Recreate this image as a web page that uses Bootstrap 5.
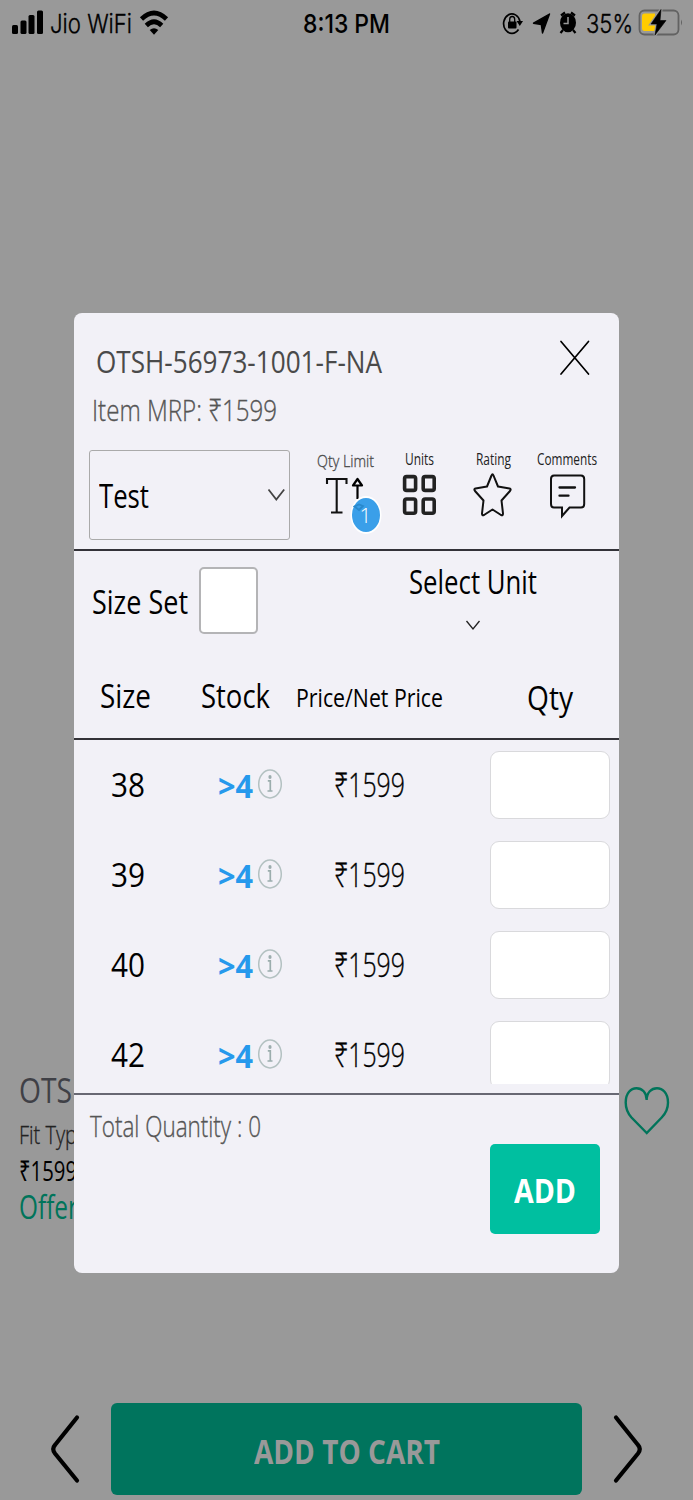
<!DOCTYPE html>
<html lang="en">
<head>
<meta charset="utf-8">
<meta name="viewport" content="width=device-width, initial-scale=1">
<title>Add to cart</title>
<link href="https://cdn.jsdelivr.net/npm/bootstrap@5.3.0/dist/css/bootstrap.min.css" rel="stylesheet">
<style>
  body { font-family: "Open Sans", "Noto Sans", sans-serif; background: #999; color: #000; }
  svg { display: block; flex: none; }
  .screen { width: 693px; height: 1500px; }
  .fit { display: inline-block; white-space: nowrap; transform-origin: 0 50%; }
  .statusbar { height: 47px; font-family: Inter, Roboto, sans-serif; font-size: 26px; line-height: 47px; }
  .thin, .p-fit, .t-mrp, .limit, .cost, .total { font-weight: 300; -webkit-text-stroke: .35px currentColor; }
  .clock { font-weight: 500; }
  .product { margin-top: 1020px; padding-left: 19px; height: 336px; }
  .p-name { font-size: 34.5px; line-height: 46px; color: #3f4046; }
  .p-fit { font-size: 25px; line-height: 43px; color: #222; }
  .p-price { font-size: 28px; line-height: 29px; }
  .p-offer { font-size: 32px; line-height: 44px; color: #00745a; }
  .wish { margin: 18px 22px 0 0; }
  .cart-btn { width: 471px; height: 92px; border-radius: 6px; background: #00745d; color: #999; font-size: 34px; font-weight: 700; border: 0; line-height: 92px; padding: 2px 0 0; }
  .sheet { left: 74px; top: 313px; width: 545px; height: 960px; border-radius: 8px; background: #f2f1f7; overflow: hidden; }
  .sheet-head { height: 119px; padding: 23px 27px 0 19px; }
  .t-code { font-size: 31.5px; line-height: 50px; color: #4a4a4a; padding-left: 3px; }
  .t-mrp { font-size: 30px; line-height: 48px; color: #555; }
  .tools { padding: 18px 15px 0; height: 117px; gap: 18px; }
  .pick { width: 201px; height: 90px; border: 1px solid #aaa; border-radius: 3px; padding: 0 3px 0 9px; background: transparent; font-size: 33px; }
  .pick .fit { padding-top: 2px; }
  .tool { width: 74px; font-size: 16px; line-height: 20px; color: #222; }
  .tool .fit { position: relative; top: -1px; }
  .tool.limit { color: #4c4c4c; font-size: 17px; line-height: 22px; }
  .tool.limit .fit { top: 0; }
  .tool.limit svg { margin-top: -2px; }
  .rule { height: 2px; background: #333238; }
  .rule-foot { margin-top: 9px; background: #686873; }
  .set-row { height: 103px; padding-left: 18px; font-size: 33px; }
  .set-row .set-label { line-height: 102px; }
  .tick { width: 59px; height: 67px; border: 2px solid #b4b4b6; border-radius: 5px; background: #fff; margin: 16px 0 0 11px; }
  .unit { width: 146px; margin-left: 142px; line-height: 61px; }
  .unit svg { margin-top: 7px; }
  .cols { display: grid; grid-template-columns: 107px 109px 159px 170px; align-items: center; justify-items: center; }
  .cols > :nth-child(4) { margin-left: 31px; }
  .col-head { height: 84px; font-size: 33px; }
  .col-head .size-h { margin-right: 5px; }
  .col-head .net { font-size: 25.5px; padding-top: 3px; }
  .rows { height: 344px; overflow: hidden; }
  .line-item { height: 90px; font-size: 33px; line-height: 90px; }
  .stock { justify-self: start; padding-left: 37px; color: #2699ec; font-weight: 700; line-height: 88px; }
  .stock .fit { padding-top: 2px; }
  .stock svg { margin: 0 0 2px 4px; }
  .qty { width: 120px; height: 68px; border: 1px solid #d9d9dc; border-radius: 9px; background: #fff; }
  .sheet-foot { padding: 0 19px 0 16px; }
  .total { font-size: 29px; line-height: 61px; color: #555; }
  .add-btn { width: 110px; height: 90px; margin-top: 49px; border: 0; border-radius: 5px; background: #00bfa0; color: #fff; font-size: 34.5px; font-weight: 700; line-height: 90px; padding: 1px 0 0; }
</style>
</head>
<body>
<div class="screen position-relative overflow-hidden">

  <div class="statusbar d-flex">
    <svg width="50" height="47"><rect x="12" y="25" width="6" height="9" rx="1.5"/><rect x="20.5" y="20.5" width="6" height="13.5" rx="1.5"/><rect x="28.5" y="15" width="6" height="19" rx="1.5"/><rect x="37" y="10.5" width="6" height="23.5" rx="1.5"/></svg>
    <span class="fit thin" data-w="82">Jio WiFi</span>
    <svg width="171" height="47" viewBox="132 0 171 47"><g fill="none" stroke="#000" stroke-width="4.6"><path d="M141.500 19Q154 7 166.500 19"/><path d="M146.300 25.500Q154 18 161.700 25.500"/></g><path d="M154 34.800L149.700 30Q154 26.500 158.300 30Z"/></svg>
    <span class="fit clock" data-w="87">8:13 PM</span>
    <svg width="196" height="47" viewBox="390 0 196 47">
      <path d="M518.500 29.500A8.300 9.700 0 1 1 520 21.500" fill="none" stroke="#000" stroke-width="1.700"/><path d="M516.500 21h6.500l-3.200 5z"/>
      <rect x="508" y="21.500" width="8.500" height="7" rx="1"/><path d="M509.700 22v-2.500a2.500 3 0 0 1 5 0V22" fill="none" stroke="#000" stroke-width="1.300"/>
      <path d="M549.500 14L533.500 23.200L541.300 24.500L542.500 33Z" stroke="#000" stroke-linejoin="round" stroke-width="1.400"/>
      <ellipse cx="568" cy="22.800" rx="8" ry="9.500"/><path d="M561 15.500l4-3M575 15.500l-4-3M563 30l-2.500 3M573 30l2.500 3" stroke="#000" stroke-width="2.200"/><path d="M568 17v6.500h-4.500" fill="none" stroke="#999" stroke-width="1.500"/>
    </svg>
    <span class="fit thin" data-w="47">35%</span>
    <svg width="60" height="47" viewBox="633 0 60 47">
      <rect x="639.500" y="10.500" width="39" height="24" rx="5" fill="none" stroke="#626262" stroke-width="1.800"/><path d="M681 19.500q2 3 0 6z" fill="#626262"/>
      <path d="M644.500 13.500h10.500v17.500h-10.500q-2.500 0-2.500-3V16.500q0-3 2.500-3z" fill="#fc0"/>
      <path d="M661 9.500L651 24h6l-2 11L666 20.500h-6z" stroke="#999" stroke-width="3"/><path d="M661 9.500L651 24h6l-2 11L666 20.500h-6z" stroke="#000" stroke-width=".6"/>
    </svg>
  </div>

  <div class="product d-flex justify-content-between">
    <div class="text-nowrap">
      <div class="p-name"><span class="fit" data-w="53">OTS</span></div>
      <div class="p-fit"><span class="fit" data-w="58">Fit Typ</span></div>
      <div class="p-price"><span class="fit" data-w="58">₹1599</span></div>
      <div class="p-offer"><span class="fit" data-w="59">Offer</span></div>
    </div>
    <svg class="wish" width="48" height="52" viewBox="623 1085 48 52"><path d="M646.700 1133L631.500 1117.500Q625.700 1111 625.700 1102.500C625.700 1093 631 1088.200 636.500 1088.200C642 1088.200 646.700 1092.500 646.700 1100C646.700 1092.500 651.500 1088.200 657 1088.200C662.500 1088.200 668 1093 668 1102.500Q668 1111 661.700 1117.500Z" fill="none" stroke="#00745a" stroke-width="2.400"/></svg>
  </div>

  <div class="d-flex">
    <svg width="111" height="92" viewBox="0 1403 111 92"><path d="M77 1417.500L55 1445Q51.500 1449 55 1453.500L77 1480.500" fill="none" stroke="#000" stroke-width="4.200" stroke-linecap="round"/></svg>
    <button class="cart-btn text-center"><span class="fit" data-w="186">ADD TO CART</span></button>
    <svg width="111" height="92" viewBox="582 1403 111 92"><path d="M616 1417.500L638 1445Q641.500 1449 638 1453.500L616 1480.500" fill="none" stroke="#000" stroke-width="4.200" stroke-linecap="round"/></svg>
  </div>

  <div class="sheet position-absolute">
    <div class="sheet-head d-flex justify-content-between">
      <div class="text-nowrap">
        <div class="t-code"><span class="fit" data-w="286">OTSH-56973-1001-F-NA</span></div>
        <div class="t-mrp"><span class="fit" data-w="185" data-x="-1">Item MRP: ₹1599</span></div>
      </div>
      <svg width="35" height="40" viewBox="557 336 35 40"><path d="M561 341.500L588.500 374M588.500 341.500L561 374" stroke="#000" stroke-width="1.700" stroke-linecap="round"/></svg>
    </div>
    <div class="tools d-flex">
      <div class="pick d-flex align-items-center justify-content-between">
        <span class="fit" data-w="50">Test</span>
        <svg width="19" height="14" viewBox="268 488 19 14"><path d="M269.500 489.500L277.300 499.500L285.200 489.500" fill="none" stroke="#444" stroke-width="1.800"/></svg>
      </div>
      <div class="d-flex text-center">
        <div class="tool limit"><span class="fit" data-w="57">Qty Limit</span>
          <svg width="74" height="68" viewBox="308 470 74 68">
            <path d="M327 484v-5h19.500v5M336.700 479v33.500M331 512.500h11.500" fill="none" stroke="#111" stroke-width="2.100"/>
            <path d="M357.500 479l-4.500 6.500h9zM357.500 485v14" fill="none" stroke="#000" stroke-width="2.200" stroke-linejoin="round"/>
            <ellipse cx="366" cy="515" rx="15.500" ry="19" fill="#fff"/><ellipse cx="366" cy="515" rx="14" ry="17" fill="#3a9fe9"/>
            <path d="M354.500 506.500l4.500 3.500 4-4-4-1.500z" fill="#3a9fe9" stroke="#2889cd" stroke-width="1.800"/>
            <text x="365.500" y="523" text-anchor="middle" font-family="Open Sans" font-size="21" font-weight="300" fill="#fff">1</text>
          </svg>
        </div>
        <div class="tool"><span class="fit" data-w="29">Units</span>
          <svg width="74" height="60" viewBox="382 470 74 60"><g fill="none" stroke="#222" stroke-width="3.600"><rect x="404.600" y="476.600" width="11" height="13.800" rx="2"/><rect x="423.200" y="476.600" width="11" height="13.800" rx="2"/><rect x="404.600" y="499" width="11" height="14.300" rx="2"/><rect x="423.200" y="499" width="11" height="14.300" rx="2"/></g></svg>
        </div>
        <div class="tool"><span class="fit" data-w="35">Rating</span>
          <svg width="74" height="60" viewBox="456 470 74 60"><path d="M491.500 475.500q1-2.500 2 0l4.500 11 11.500 2q2 .5.500 2.500l-8.500 9.500 1.500 13q0 2.500-2 1.500l-8.500-5.500-8.500 5.500q-2 1-2-1.500l1.500-13-8.500-9.500q-1.500-2 .5-2.500l11.500-2z" fill="none" stroke="#111" stroke-width="2" stroke-linejoin="round"/></svg>
        </div>
        <div class="tool"><span class="fit" data-w="60">Comments</span>
          <svg width="74" height="60" viewBox="530 470 74 60"><path d="M554 475.500h27q3.200 0 3.200 3.500v25q0 3.500-3.200 3.500h-11.500l-7.500 8.500v-8.500h-8q-3 0-3-3.500V479q0-3.500 3-3.500z" fill="none" stroke="#111" stroke-width="2"/><path d="M559.500 487.500h15.500M559.500 495.700h9" stroke="#111" stroke-width="2.300" stroke-linecap="round"/></svg>
        </div>
      </div>
    </div>
    <div class="rule"></div>
    <div class="set-row d-flex">
      <div class="set-label"><span class="fit" data-w="96">Size Set</span></div>
      <div class="tick"></div>
      <div class="unit text-center"><span class="fit" data-w="128">Select Unit</span>
        <svg class="mx-auto" width="16" height="12" viewBox="465 619 16 12"><path d="M466.500 621L473 629L479.500 621" fill="none" stroke="#222" stroke-width="1.300"/></svg>
      </div>
    </div>
    <div class="cols col-head">
      <span class="size-h"><span class="fit" data-w="51">Size</span></span>
      <span><span class="fit" data-w="69">Stock</span></span>
      <span class="net"><span class="fit" data-w="147">Price/Net Price</span></span>
      <span class="pt-1"><span class="fit" data-w="46">Qty</span></span>
    </div>
    <div class="rule"></div>
    <div class="rows" id="rows"></div>
    <div class="rule rule-foot"></div>
    <div class="sheet-foot d-flex justify-content-between">
      <div class="total"><span class="fit" data-w="171">Total Quantity : 0</span></div>
      <button class="add-btn text-center"><span class="fit" data-w="62">ADD</span></button>
    </div>
  </div>
</div>

<script src="https://cdn.jsdelivr.net/npm/bootstrap@5.3.0/dist/js/bootstrap.bundle.min.js"></script>
<script>
  // One line per size
  document.getElementById('rows').innerHTML = [38, 39, 40, 42].map(function (size) {
    return '<div class="cols line-item">' +
      '<span><span class="fit" data-w="34">' + size + '</span></span>' +
      '<span class="stock d-flex align-items-center"><span class="fit" data-w="35">&gt;4</span>' +
      '<svg width="26" height="32" viewBox="0 0 26 32"><g fill="none" stroke="#b3c1c1"><ellipse cx="13" cy="16" rx="11.300" ry="13.900" stroke-width="1.500"/><path d="M10.800 12.800h2.500v10M10.500 23h5" stroke="#9badad" stroke-width="1.700"/></g><ellipse cx="13" cy="9" rx="1.600" ry="1.900" fill="#9badad"/></svg></span>' +
      '<span><span class="fit cost" data-w="71">₹1599</span></span>' +
      '<div class="qty"></div></div>';
  }).join('');

  document.querySelectorAll('.fit').forEach(function (el) {
    var natural = el.getBoundingClientRect().width, w = +el.dataset.w;
    el.style.transform = 'scaleX(' + (w / natural) + ')';
    el.style.marginRight = (w - natural) + 'px';
    if (el.dataset.x) el.style.marginLeft = el.dataset.x + 'px';
  });
</script>
</body>
</html>
